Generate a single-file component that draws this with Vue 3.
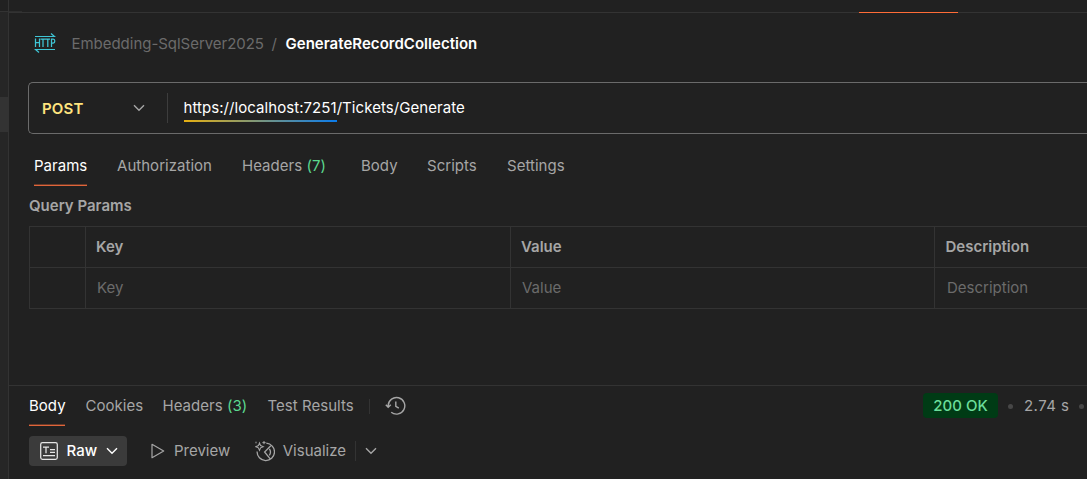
<script setup>
const requestTabs = [
  { label: 'Params', width: 53, active: true },
  { label: 'Authorization', width: 95 },
  { label: 'Headers', count: 7, width: 89 },
  { label: 'Body', width: 36 },
  { label: 'Scripts', width: 50 },
  { label: 'Settings', width: 59 },
]
const responseTabs = [
  { label: 'Body', width: 36, active: true },
  { label: 'Cookies', width: 57 },
  { label: 'Headers', width: 85, count: 3 },
  { label: 'Test Results', width: 86 },
]
const columns = ['Key', 'Value', 'Description']
</script>

<template>
  <div class="window">
    <aside class="rail">
      <div class="rail-top"></div>
      <div class="rail-item"></div>
    </aside>
    <main class="main">
      <div class="tabstrip">
        <div class="strip-stub"></div>
        <div class="strip-active"></div>
      </div>

      <header class="crumbs">
        <svg class="http" width="22" height="22" viewBox="0 0 22 22" fill="none" stroke="#3fc6d6">
          <path d="M1 3.5H20.5L17 0.5M21 16.5H1.5L5 19.5" stroke-width="1.2" />
          <path d="M1.5 5.5V14M5.5 5.5V14M1.5 9.5H5.5M6.5 6H11.5M9 6V14M11.5 6H16M13.8 6V14M17.5 14V6H19.2Q20.8 6 20.8 8T19.2 10.2H17.5" stroke-width="1.25" />
        </svg>
        <span class="collection">Embedding-SqlServer2025</span>
        <span class="slash">/</span>
        <span class="request">GenerateRecordCollection</span>
      </header>

      <div class="urlbar">
        <span class="method">POST</span>
        <svg class="chev" width="12" height="8" viewBox="0 0 12 8"><path d="M1 1.2L6 6.2L11 1.2" /></svg>
        <i class="url-sep"></i>
        <span class="host">https://localhost:7251</span><span class="path">/Tickets/Generate</span>
      </div>

      <nav class="req-tabs">
        <span v-for="t in requestTabs" :key="t.label" class="tab" :class="{ active: t.active }" :style="{ width: t.width + 'px' }">{{ t.label }}<b v-if="t.count"> ({{ t.count }})</b></span>
      </nav>

      <h3 class="section">Query Params</h3>
      <div class="grid">
        <div class="cell"></div>
        <div v-for="c in columns" :key="c" class="cell head">{{ c }}</div>
        <div class="cell"></div>
        <div v-for="c in columns" :key="'v' + c" class="cell hint">{{ c }}</div>
      </div>

      <section class="response">
        <div class="res-bar">
          <span v-for="t in responseTabs" :key="t.label" class="tab" :class="{ active: t.active }" :style="{ width: t.width + 'px' }">{{ t.label }}<b v-if="t.count"> ({{ t.count }})</b></span>
          <i class="sep short"></i>
          <svg class="history" width="21" height="20" viewBox="0 0 21 20" fill="none" stroke="#a6a6a6" stroke-width="1.4">
            <path d="M3.2 11V9.5A8.3 8.3 0 1 1 6.2 16.2M0.8 8.8L3.2 11.3L5.8 8.8M10.8 5.5V10.3L13.8 12.2" />
          </svg>
          <div class="status">
            <span class="ok">200 OK</span>
            <i class="dot"></i>
            <span class="time">2.74 s</span>
            <i class="dot"></i>
          </div>
        </div>

        <div class="view-bar">
          <div class="raw">
            <svg width="18" height="18" viewBox="0 0 18 18" fill="none" stroke="#e6e6e6" stroke-width="1.25">
              <rect x="0.7" y="0.7" width="16.6" height="16.6" rx="1.8" />
              <path d="M3 5H9M6 5V11.2M10 7.5H15M10 10.3H15M3 13.6H15" />
            </svg>
            <span>Raw</span>
            <svg class="chev light" width="12" height="8" viewBox="0 0 12 8"><path d="M1 1.2L6 6.2L11 1.2" /></svg>
          </div>
          <svg class="play" width="14" height="16" viewBox="0 0 14 16" fill="none" stroke="#a6a6a6" stroke-width="1.2" stroke-linejoin="round"><path d="M1 1.3L12.7 8L1 14.7Z" /></svg>
          <span class="preview">Preview</span>
          <svg class="viz" width="20" height="21" viewBox="0 0 20 21" fill="none" stroke="#a6a6a6" stroke-width="1.3">
            <path d="M11.3 2.2A8.7 8.7 0 1 1 2.1 10.6M16 4.5L9.6 11L15.2 17.8M14.4 7.8Q16.6 11 14.4 14.4" />
            <path d="M4.5 2L5.6 4.6L8.2 5.7L5.6 6.8L4.5 9.4L3.4 6.8L0.8 5.7L3.4 4.6Z" stroke-width="1.1" />
            <path d="M9 0V3.2M7.4 1.6H10.6M1 0.7V2.3" stroke-width="1" />
          </svg>
          <span class="visualize">Visualize</span>
          <i class="sep"></i>
          <svg class="chev last" width="12" height="8" viewBox="0 0 12 8"><path d="M1 1.2L6 6.2L11 1.2" /></svg>
        </div>
      </section>
    </main>
  </div>
</template>

<style>
body { background: #212121; overflow: hidden; }
</style>

<style scoped>
* { box-sizing: border-box; }
.window { display: flex; width: 1087px; height: 479px; overflow: hidden; background: #212121; color: #a6a6a6; font: 15px/20px Inter, sans-serif; white-space: nowrap; }
svg, i, span { flex: none; }
.rail { flex: none; width: 9px; background: #262626; border-right: 1px solid #333; }
.rail-top { height: 12px; background: #212121; border-bottom: 1px solid #333; }
.rail-item { height: 35px; margin-top: 85px; background: #333; }
.main { flex: 1; min-width: 0; display: flex; flex-direction: column; }
.tabstrip { flex: none; display: flex; align-items: flex-end; height: 13px; border-bottom: 1px solid #333; }
.strip-stub { width: 13px; height: 1px; background: #2e2e2e; }
.strip-active { width: 99px; height: 1px; margin: 0 0 -1px 837px; background: #ff6c37; }
.crumbs { flex: none; display: flex; align-items: center; height: 62px; padding-left: 25px; }
.collection { margin-left: 15.5px; width: 193px; color: #6b6b6b; letter-spacing: -0.03px; }
.slash { width: 21px; padding-left: 7px; color: #6b6b6b; }
.request { color: #fff; font-weight: 600; letter-spacing: 0.03px; }
.urlbar { flex: none; display: flex; align-items: center; height: 52px; margin: 7px 0 0 19px; border: 1px solid #6b6b6b; border-right: 0; border-radius: 5px 0 0 5px; padding-left: 13px; }
.method { width: 91px; padding-top: 1px; color: #ffe47e; font-weight: 600; letter-spacing: 0.15px; }
.chev { fill: none; stroke: #a6a6a6; stroke-width: 1.4; }
.light { stroke: #fff; }
.url-sep { width: 1px; height: 30px; margin: 0 15.5px 0 22px; background: #3d3d3d; }
.host, .path { color: #fff; height: 28px; line-height: 28px; letter-spacing: 0.06px; }
.host { border-bottom: 2px solid; border-image: linear-gradient(90deg, #e8b010, #097bed) 1; }
.req-tabs { flex: none; display: flex; gap: 30px; height: 52px; padding-left: 25px; }
.tab { position: relative; }
.req-tabs .tab { height: 52px; line-height: 64px; letter-spacing: 0.03px; }
.tab b { font-weight: 400; color: #5bd88f; white-space: pre; }
.tab.active { color: #fff; box-shadow: inset 0 -1px #e0653a, inset 0 -2px #6b3a29; }
.section { margin: 0 0 0 20px; height: 40px; font-size: 15px; line-height: 40px; font-weight: 600; }
.grid { flex: none; display: grid; grid-template-columns: 56px 425px 424px 153px; grid-auto-rows: 41px; height: 83px; margin-left: 20px; border: 1px solid #333; border-width: 1px 0 0 1px; }
.cell { border: 1px solid #333; border-width: 0 1px 1px 0; line-height: 40px; padding-left: 10px; }
.head { font-weight: 600; }
.hint { padding-left: 11px; color: #6b6b6b; }
.cell:nth-child(4) { padding-left: 10.5px; }
.cell:nth-child(8) { padding-left: 12px; }
.response { flex: none; margin-top: 76px; border-top: 1px solid #333; }
.res-bar { display: flex; align-items: center; height: 40px; padding-left: 20px; }
.res-bar .tab { height: 40px; line-height: 40px; margin-right: 20px; letter-spacing: 0.03px; }
.res-bar .tab.active { margin-right: 20.5px; }
.sep { width: 1px; height: 20px; background: #333; }
.sep.short { height: 15px; margin-left: -5px; }
.history { margin-left: 15px; }
.status { display: flex; align-items: center; margin-left: auto; }
.ok { height: 25px; line-height: 26px; margin-top: -1px; width: 75px; text-align: center; border-radius: 4px; background: #003b15; color: #6bdd9a; font-weight: 500; }
.dot { width: 5px; height: 5px; border-radius: 50%; background: #474747; margin-left: 10px; }
.time { width: 46px; margin-left: 11px; letter-spacing: 0.45px; }
.status .dot:last-child { margin: 0 3px 0 9px; }
.view-bar { display: flex; align-items: center; height: 30px; margin: 10px 0 0 20px; }
.raw { display: flex; align-items: center; width: 98px; height: 30px; padding-left: 11px; background: #3b3b3b; border-radius: 4px; color: #fff; font-weight: 500; }
.raw span { width: 48px; padding-left: 8.5px; }
.play { margin-left: 24px; }
.preview { margin-left: 9px; }
.viz { margin-left: 25px; }
.visualize { margin-left: 7.5px; }
.view-bar .sep { margin-left: 9px; }
.last { margin-left: 8.5px; }
</style>
